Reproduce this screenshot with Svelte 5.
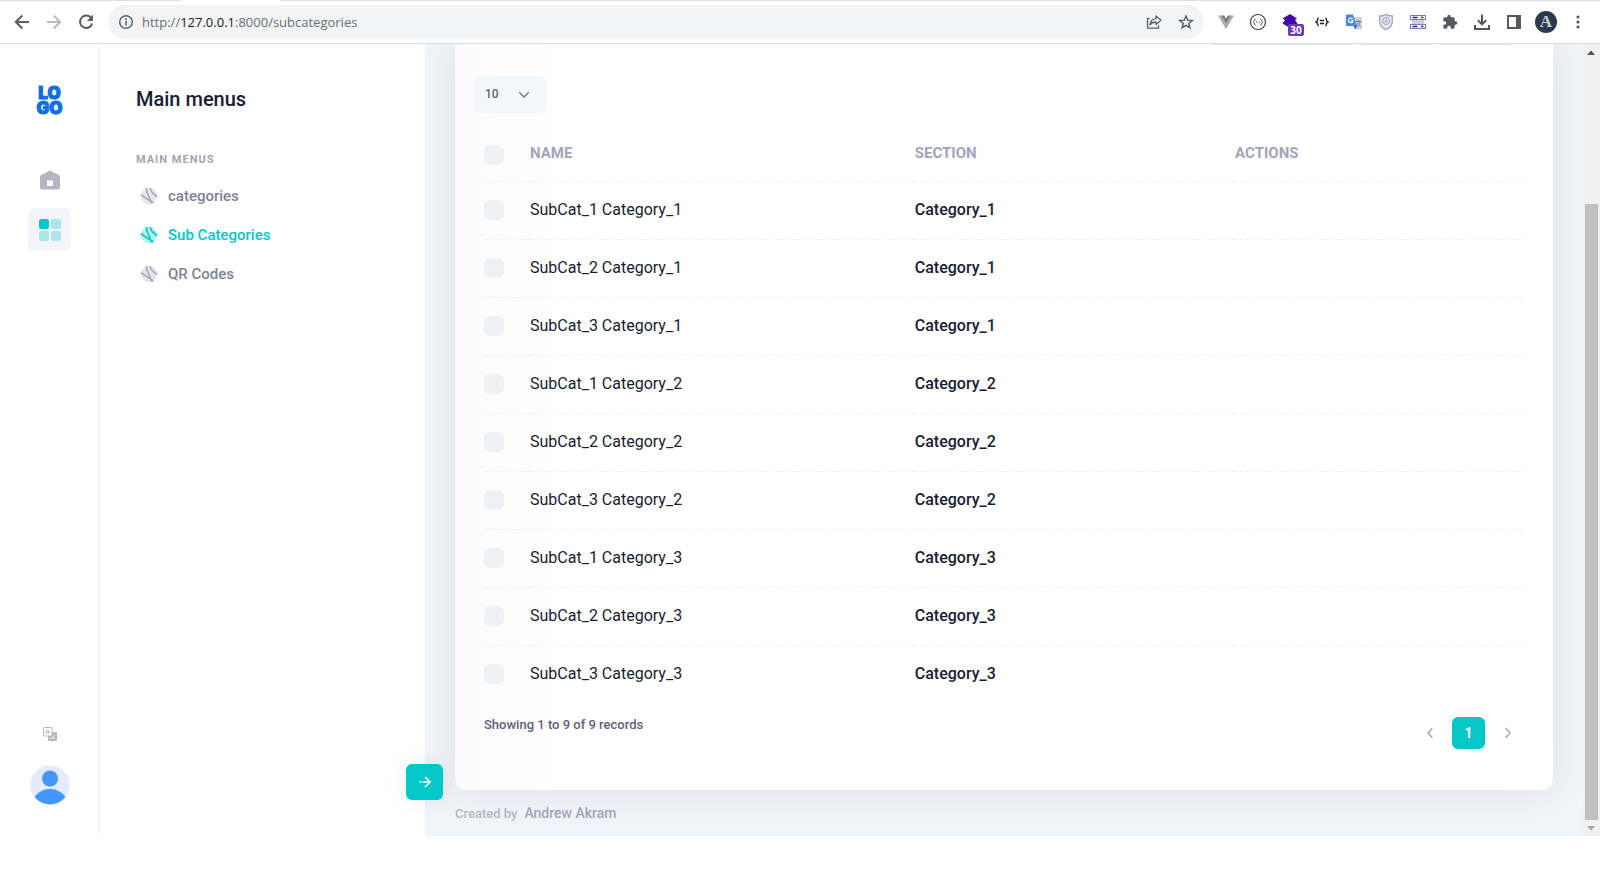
<script>
  const rows = [1, 2, 3].flatMap((c) =>
    [1, 2, 3].map((s) => ({ name: `SubCat_${s} Category_${c}`, section: `Category_${c}` }))
  );
  const menu = [
    { label: 'categories', active: false },
    { label: 'Sub Categories', active: true },
    { label: 'QR Codes', active: false }
  ];
</script>

<header class="browser">
  <button class="cell" aria-label="Back">
    <svg width="16" height="16" viewBox="0 0 16 16" fill="none" stroke="#5b5f63" stroke-width="2"><path d="M15 8H2M8.300 1.500 1.800 8l6.500 6.500" /></svg>
  </button>
  <button class="cell" aria-label="Forward">
    <svg width="16" height="16" viewBox="0 0 16 16" fill="none" stroke="#b9bbbe" stroke-width="2"><path d="M1 8h13M7.700 1.500 14.200 8l-6.500 6.500" /></svg>
  </button>
  <button class="cell" aria-label="Reload">
    <svg width="16" height="16" viewBox="0 0 16 16"><path d="M13.300 4.200A6.200 6.200 0 1 0 14.200 9.500" fill="none" stroke="#5b5f63" stroke-width="2" /><path d="M15 .8v6.200H8.800z" fill="#5b5f63" /></svg>
  </button>
  <div class="address">
    <button class="cell" aria-label="Site information">
      <svg width="16" height="16" viewBox="0 0 16 16"><circle cx="8" cy="8" r="6.300" fill="none" stroke="#5f6368" stroke-width="1.500" /><path d="M7.200 7h1.600v4.500H7.200zM7.200 4.300h1.600v1.600H7.200z" fill="#5f6368" /></svg>
    </button>
    <div class="url">http://<b>127.0.0.1</b>:8000/subcategories</div>
    <button class="cell" aria-label="Share">
      <svg width="16" height="16" viewBox="0 0 16 16" fill="none" stroke="#5f6368" stroke-width="1.300"><path d="M3.500 4.500h-2v9.700h11v-3" /><path d="M10 2l5 4.300-5 4.200V8C7 8 5.200 9 3.800 11 4.200 7.500 6.300 5 10 4.600z" stroke-linejoin="round" /></svg>
    </button>
    <button class="cell" aria-label="Bookmark">
      <svg width="16" height="16" viewBox="0 0 16 16" fill="none" stroke="#55595e" stroke-width="1.400"><path d="m8 2 1.700 4.200 4.500.3-3.500 2.900 1.200 4.400L8 11.400l-3.900 2.400 1.200-4.400-3.500-2.900 4.500-.3z" /></svg>
    </button>
  </div>
  <button class="cell" aria-label="Vue devtools">
    <svg width="16" height="16" viewBox="0 0 16 16"><path d="M0 1.500h3.300L8 9.700l4.700-8.200H16L8 15z" fill="#aaa" /><path d="M3.300 1.500H6.200L8 4.700l1.800-3.200h2.900L8 9.700z" fill="#777" /></svg>
  </button>
  <button class="cell" aria-label="JSON viewer">
    <svg width="18" height="18" viewBox="0 0 18 18" fill="none" stroke="#444" stroke-width="1.200"><circle cx="9" cy="9" r="7.500" /><path d="M6.500 6C4.800 6 6 8.500 4.300 9c1.700.5.500 3 2.200 3M11.500 6c1.700 0 .5 2.500 2.200 3-1.700.5-.5 3-2.200 3M6.800 9h1M8.500 9h1M10.200 9h1" stroke-width="1" /></svg>
  </button>
  <button class="cell badged" aria-label="Extension with 30 notices">
    <svg width="18" height="18" viewBox="0 0 18 18" fill="#4208a8"><path d="M9 1l7 4.500-2 1.500 2.500 3.500L9 15l-7.500-4.500L4 7 1.500 5.500z" /></svg>
    <span class="badge">30</span>
  </button>
  <button class="cell" aria-label="Formatter">
    <svg width="14" height="14" viewBox="0 0 16 16" fill="none" stroke="#222" stroke-width="1.700"><path d="M4.300 3.700c-2.400 0-.6 3.700-2.800 4.300 2.200.6.400 4.300 2.800 4.300M11.700 3.700c2.400 0 .6 3.700 2.800 4.300-2.200.6-.4 4.300-2.800 4.300" /><path d="M5.500 6.300h5M5.500 9.600h5" /></svg>
  </button>
  <button class="cell" aria-label="Translate">
    <svg width="16" height="16" viewBox="0 0 16 16"><path d="M7 3h9v12.500H9z" fill="#cfd3d8" /><path d="M9.500 7.500h5.500M12.200 6v1.500M14 7.500c-.5 2.500-2 4-4 5M10.800 9l3.700 3.500" stroke="#6f7780" fill="none" /><path d="M0 1.500C0 1 .5.500 1 .500h6L11 12H1c-.5 0-1-.5-1-1z" fill="#4285f4" /><path d="M8 12h3l-2 3.500z" fill="#2356b8" /><path d="M6.600 4.900a2.300 2.300 0 1 0 .5 1.800H4.900" fill="none" stroke="#fff" stroke-width="1.200" /></svg>
  </button>
  <button class="cell" aria-label="Shield">
    <svg width="16" height="18" viewBox="0 0 16 18" fill="none" stroke="#9aa3b3"><path d="M8 1.500c2 1.200 4 1.500 6.300 1.500v5c0 4-2.500 7-6.300 8.500C4.200 15 1.700 12 1.700 8V3C4 3 6 2.700 8 1.500z" fill="#e6e9ef" stroke-width="1.300" /><circle cx="8" cy="8" r="3.500" /><path d="M8 5.500v3.800M6.500 8 8 9.500 9.500 8" /></svg>
  </button>
  <button class="cell" aria-label="Servers">
    <svg width="16" height="16" viewBox="0 0 16 16"><rect x="2" y="5" width="12" height="6" fill="#c9cbe8" /><g fill="#fff" stroke="#7377b5"><rect x=".5" y="1.500" width="15" height="4" /><rect x=".5" y="10.500" width="15" height="4" /></g><path d="M2.500 3.500h5M11 3.500h2.500M2.500 12.500h5M11 12.500h2.500" stroke="#25297a" stroke-width="1.400" /></svg>
  </button>
  <button class="cell" aria-label="Extensions">
    <svg width="16" height="16" viewBox="0 0 24 24" fill="#55595e"><path d="M20.500 11H19V7c0-1.100-.9-2-2-2h-4V3.500a2.500 2.500 0 0 0-5 0V5H4c-1.100 0-2 .9-2 2v3.800h1.500a2.700 2.700 0 0 1 0 5.400H2V20c0 1.100.9 2 2 2h3.800v-1.500a2.700 2.700 0 0 1 5.400 0V22H17c1.100 0 2-.9 2-2v-4h1.500a2.500 2.500 0 0 0 0-5z" /></svg>
  </button>
  <button class="cell" aria-label="Downloads">
    <svg width="18" height="18" viewBox="0 0 18 18" fill="none" stroke="#55595e" stroke-width="2"><path d="M9 1.500v9.500M4.800 7.200 9 11.400l4.200-4.200M2 12v4h14v-4" /></svg>
  </button>
  <button class="cell" aria-label="Side panel">
    <svg width="16" height="16" viewBox="0 0 16 16"><rect x="2" y="2" width="12" height="12" fill="none" stroke="#55595e" stroke-width="2" /><path d="M10 2h4v12h-4z" fill="#55595e" /></svg>
  </button>
  <button class="cell" aria-label="Profile"><span class="profile">A</span></button>
  <button class="cell" aria-label="Browser menu">
    <svg width="4" height="14" viewBox="0 0 4 14" fill="#55595e"><circle cx="2" cy="2" r="1.600" /><circle cx="2" cy="7" r="1.600" /><circle cx="2" cy="12" r="1.600" /></svg>
  </button>
</header>

<div class="page">
  <nav class="rail" aria-label="Primary">
    <a class="logo" href="#home">LO<br />GO</a>
    <a class="tile" href="#home" aria-label="Home">
      <svg width="20" height="20" viewBox="0 0 20 20"><path fill-rule="evenodd" d="M9 .900Q10 .3 11 .900L19 5Q20 5.600 20 7v10.500Q20 19.500 18 19.500H2Q0 19.500 0 17.500V7Q0 5.600 1 5zM7 10.500v5.500h6v-5.500z" fill="#b5b5c3" /></svg>
    </a>
    <a class="tile active" href="#menus" aria-label="Menus">
      <svg width="22" height="22" viewBox="0 0 22 22" fill="#04c8c8"><rect width="10" height="10" rx="2" /><g opacity=".3"><rect x="12" width="10" height="10" rx="2" /><rect y="12" width="10" height="10" rx="2" /><rect x="12" y="12" width="10" height="10" rx="2" /></g></svg>
    </a>
    <button class="lang" aria-label="Language">
      <svg width="14" height="14" viewBox="0 0 14 14"><rect x="5" y="5" width="9" height="9" rx="1" fill="#b5b5c3" /><path d="M7 11.500c2 0 3.500-1 4.500-3M9.500 10.500l2.500 1.700" stroke="#fff" fill="none" /><rect x=".5" y=".5" width="8.500" height="8.500" rx=".8" fill="#fff" stroke="#b5b5c3" /><path d="M2.800 7 4.700 2.500 6.700 7M3.500 5.600h2.500" fill="none" stroke="#b5b5c3" /></svg>
    </button>
    <button class="user" aria-label="Account">
      <svg width="40" height="40" viewBox="0 0 40 40"><clipPath id="face"><circle cx="20" cy="20" r="19.500" /></clipPath><g clip-path="url(#face)"><path fill="#e4eaff" d="M0 0h40v40H0z" /><circle cx="20" cy="13.500" r="8" fill="#4396ff" /><circle cx="20" cy="43" r="19" fill="#4396ff" /></g></svg>
    </button>
  </nav>

  <aside class="side">
    <h1>Main menus</h1>
    <h2>MAIN MENUS</h2>
    <ul>
      {#each menu as item}
        <li>
          <a href="#{item.label}" class:active={item.active}>
            <svg width="18" height="18" viewBox="0 0 18 18"><circle cx="9" cy="9" r="8.300" fill="currentColor" opacity=".3" /><path d="M1 7.800C3.500 9 5 10.700 7 11.800s4.500 2 6.300 4.400M6.500 1.300c-.2 2.700.6 4.500 1.500 6.200 1 2 2.200 5 3.500 9M10.200 1c.3 2.500 1 3.800 2.500 5.200 1.300 1.200 3 2 4.200 3.600" fill="none" stroke="currentColor" stroke-width="1.600" /></svg>
            <span>{item.label}</span>
          </a>
        </li>
      {/each}
    </ul>
    <button class="toggle" aria-label="Expand menu">
      <svg width="14" height="14" viewBox="0 0 14 14" fill="none" stroke="#fff" stroke-width="1.500" stroke-linecap="round" stroke-linejoin="round"><path d="M1.500 7h6" opacity=".65" /><path d="M7 7h5.300M7.500 2.500 12.300 7l-4.800 4.500" /></svg>
    </button>
  </aside>

  <main>
    <section class="card">
      <div class="tools"><i></i><i></i><i></i></div>
      <div class="select">
        <select aria-label="Records per page"><option>10</option></select>
        <svg width="12" height="8" viewBox="0 0 12 8" fill="none" stroke="#7e8299" stroke-width="1.600" stroke-linecap="round"><path d="m1.500 1.500 4.500 4.500 4.500-4.500" /></svg>
      </div>
      <table>
        <thead>
          <tr>
            <th class="pick"><input type="checkbox" aria-label="Select all" /></th>
            <th class="name">NAME</th>
            <th class="section">SECTION</th>
            <th>ACTIONS</th>
          </tr>
        </thead>
        <tbody>
          {#each rows as row}
            <tr>
              <td><input type="checkbox" aria-label="Select {row.name}" /></td>
              <td>{row.name}</td>
              <td class="strong">{row.section}</td>
              <td></td>
            </tr>
          {/each}
        </tbody>
      </table>
      <div class="bottom">
        <p>Showing 1 to 9 of 9 records</p>
        <div class="pages">
          <button aria-label="Previous page"><svg width="6" height="12" viewBox="0 0 6 12"><path d="M5 1.500 1 6l4 4.500" /></svg></button>
          <button class="current">1</button>
          <button aria-label="Next page"><svg width="6" height="12" viewBox="0 0 6 12"><path d="M1 1.500 5 6l-4 4.500" /></svg></button>
        </div>
      </div>
    </section>
    <footer><span>Created by</span><a href="#author">Andrew Akram</a></footer>
  </main>

  <div class="scrollbar" aria-hidden="true">
    <svg width="16" height="16" viewBox="0 0 16 16"><path d="M4 11h8L8 6.500z" fill="#505050" /></svg>
    <div class="track"><div class="thumb"></div></div>
    <svg width="16" height="16" viewBox="0 0 16 16"><path d="M4 6h8l-4 4.500z" fill="#a3a3a3" /></svg>
  </div>
</div>

<style>
  :global(body) {
    background: #fff;
    font-family: Roboto, sans-serif;
    color: #181c32;
  }
  * {
    box-sizing: border-box;
  }
  button {
    border: 0;
    padding: 0;
    background: none;
    font: inherit;
    display: flex;
    align-items: center;
    justify-content: center;
  }
  a {
    color: inherit;
    text-decoration: none;
  }
  .browser {
    display: flex;
    align-items: center;
    height: 44px;
    padding: 1px 6px 0;
    border-bottom: 1px solid #dadce0;
    background: linear-gradient(90deg, #dee1e6 181px, #fff 181px, #fff 280px, #dee1e6 280px) top / 100% 1px no-repeat;
  }
  .cell {
    width: 32px;
    height: 32px;
    flex: none;
  }
  .address {
    display: flex;
    align-items: center;
    flex: 1;
    height: 34px;
    margin: 0 6px;
    padding: 0 2px;
    border-radius: 17px;
    background: #f1f3f4;
  }
  .url {
    flex: 1;
    font: 13px "Open Sans", sans-serif;
    color: #6b6f74;
  }
  .url b {
    font-weight: 400;
    color: #202124;
  }
  .badged {
    position: relative;
  }
  .badge {
    position: absolute;
    left: 14px;
    top: 18px;
    width: 16px;
    height: 12px;
    border-radius: 2px;
    background: #673ab7;
    color: #fff;
    font: 700 10px/12px "Open Sans", sans-serif;
  }
  .profile {
    width: 22px;
    height: 22px;
    border-radius: 50%;
    background: #2c3a50;
    color: #c9ccd1;
    font: 700 17px/22px "Liberation Serif", serif;
  }
  .page {
    display: flex;
  }
  .rail {
    flex: none;
    width: 100px;
    display: flex;
    flex-direction: column;
    align-items: center;
    padding: 42px 0 31px;
    border-right: 1px solid #eff0f3;
  }
  .logo {
    margin-bottom: 42px;
    text-align: center;
    font: 900 17px/15px Inter, sans-serif;
    color: #0f6fde;
    -webkit-text-stroke: 1px #0f6fde;
  }
  .tile {
    width: 43px;
    height: 43px;
    margin-bottom: 7px;
    border-radius: 6px;
    display: grid;
    place-items: center;
  }
  .tile.active {
    background: #f3f6f9;
  }
  .lang {
    margin-top: auto;
    margin-bottom: 24px;
  }
  .side {
    position: relative;
    flex: none;
    width: 325px;
    padding: 42px 36px;
  }
  h1 {
    margin: 0 0 35px;
    font-size: 20px;
    line-height: 26px;
    font-weight: 500;
  }
  h2 {
    margin: 0 0 3px;
    font-size: 11px;
    line-height: 26px;
    font-weight: 700;
    letter-spacing: 1px;
    color: #a1a5b7;
  }
  ul {
    list-style: none;
    margin: 0;
    padding: 0 4px;
  }
  li a {
    display: flex;
    align-items: center;
    gap: 10px;
    height: 39px;
    font-size: 15px;
    font-weight: 500;
    color: #7e8299;
  }
  li svg {
    color: #a8a8b8;
  }
  li a.active,
  li a.active svg {
    color: #04c8c8;
  }
  .toggle {
    position: absolute;
    z-index: 1;
    right: -18px;
    bottom: 36px;
    width: 37px;
    height: 36px;
    border-radius: 6px;
    background: #04c8c8;
    box-shadow: 0 0 20px rgba(0, 0, 0, 0.08);
  }
  main {
    flex: 1;
    min-width: 0;
    overflow: hidden;
    padding: 0 30px;
    background: #f1f5f9;
  }
  .card {
    padding: 0 29px 41px;
    border-radius: 0 0 12px 12px;
    background: linear-gradient(90deg, #fbfbfd, #fff 100px);
    box-shadow: 0 0 40px rgba(82, 63, 105, 0.13);
  }
  .tools {
    display: flex;
    justify-content: flex-end;
    gap: 8px;
    padding-right: 13px;
    margin-bottom: 31px;
  }
  .tools i {
    width: 71px;
    height: 1px;
    background: #e4e6ea;
  }
  .tools i:first-child {
    width: 140px;
  }
  .select {
    display: flex;
    align-items: center;
    position: relative;
    width: 71px;
    margin-left: -9px;
  }
  select {
    appearance: none;
    width: 100%;
    height: 37px;
    padding: 0 10px 2px;
    border: 0;
    border-radius: 6px;
    background: #f3f7fa;
    color: #5e6278;
    font: 500 12px Roboto, sans-serif;
  }
  .select svg {
    position: absolute;
    right: 16px;
    pointer-events: none;
  }
  table {
    width: 100%;
    margin-top: 11px;
    table-layout: fixed;
    border-collapse: separate;
    border-spacing: 0;
  }
  th,
  td {
    height: 58px;
    padding: 0 0 3px;
    text-align: left;
    font-size: 16px;
    font-weight: 400;
    border-bottom: 1px dashed #eceef3;
  }
  th {
    padding: 0;
    font-size: 15px;
    font-weight: 700;
    color: #a1a5b7;
  }
  tr:last-child td {
    height: 57px;
    border-bottom: 0;
  }
  .pick {
    width: 46px;
    padding-top: 2px;
  }
  .name {
    width: 37%;
  }
  .section {
    width: 30.8%;
  }
  .strong {
    font-weight: 500;
  }
  thead tr th {
    border-bottom: 1px dashed #eceef3;
  }
  input {
    appearance: none;
    display: block;
    width: 20px;
    height: 20px;
    margin: 2px 0 0;
    border-radius: 6px;
    background: #eef1f4;
  }
  .bottom {
    display: flex;
    justify-content: space-between;
    padding-top: 14px;
  }
  .bottom p {
    margin: 0;
    font-size: 13px;
    line-height: 16px;
    font-weight: 500;
    color: #5e6278;
  }
  .pages {
    display: flex;
    align-items: center;
    gap: 6px;
  }
  .pages button {
    width: 33px;
    height: 32px;
    border-radius: 6px;
  }
  .pages .current {
    background: #04c8c8;
    color: #fff;
    font-size: 14px;
    font-weight: 700;
  }
  .pages path {
    fill: none;
    stroke: #a1a5b7;
    stroke-width: 1.4;
    stroke-linecap: round;
  }
  footer {
    display: flex;
    align-items: center;
    gap: 7px;
    height: 46px;
    font-size: 13px;
    font-weight: 500;
    color: #b5b5c3;
  }
  footer a {
    font-size: 14px;
    color: #a1a5b7;
  }
  .scrollbar {
    flex: none;
    width: 17px;
    display: flex;
    flex-direction: column;
    background: #f1f1f1;
  }
  .track {
    flex: 1;
    display: flex;
    align-items: flex-end;
    padding: 0 2px;
  }
  .thumb {
    width: 13px;
    height: 81%;
    background: #c1c1c1;
  }
</style>
